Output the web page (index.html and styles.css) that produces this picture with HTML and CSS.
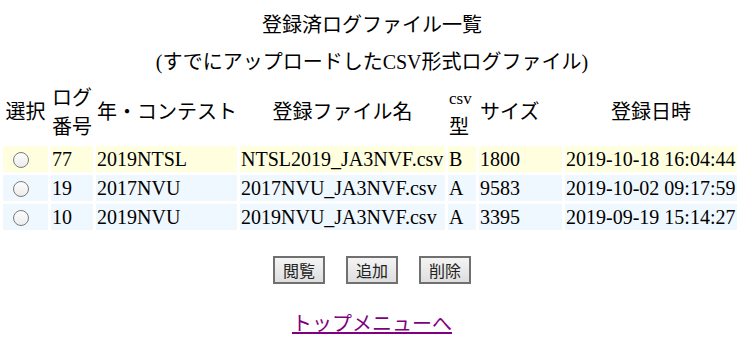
FILE: index.html
```html
<!DOCTYPE html>
<html lang="ja">
<head>
  <meta charset="UTF-8">
  <title>登録済ログファイル一覧</title>
  <link rel="stylesheet" href="styles.css">
</head>
<body>
  <div class="page">
    <div class="title">登録済ログファイル一覧</div>
    <div class="subtitle">(すでにアップロードしたCSV形式ログファイル)</div>

    <form class="log-form">
      <table class="log-table">
        <colgroup>
          <col class="c-sel">
          <col class="c-no">
          <col class="c-contest">
          <col class="c-file">
          <col class="c-type">
          <col class="c-size">
          <col class="c-date">
        </colgroup>
        <thead>
          <tr>
            <th class="center">選択</th>
            <th>ログ<br>番号</th>
            <th>年・コンテスト</th>
            <th class="center">登録ファイル名</th>
            <th><span class="small">csv</span><br>型</th>
            <th>サイズ</th>
            <th class="center">登録日時</th>
          </tr>
        </thead>
        <tbody>
          <tr class="row-new">
            <td><input type="radio" name="log" value="77" class="pick"></td>
            <td>77</td>
            <td>2019NTSL</td>
            <td>NTSL2019_JA3NVF.csv</td>
            <td>B</td>
            <td>1800</td>
            <td>2019-10-18 16:04:44</td>
          </tr>
          <tr class="row-old">
            <td><input type="radio" name="log" value="19" class="pick"></td>
            <td>19</td>
            <td>2017NVU</td>
            <td>2017NVU_JA3NVF.csv</td>
            <td>A</td>
            <td>9583</td>
            <td>2019-10-02 09:17:59</td>
          </tr>
          <tr class="row-old">
            <td><input type="radio" name="log" value="10" class="pick"></td>
            <td>10</td>
            <td>2019NVU</td>
            <td>2019NVU_JA3NVF.csv</td>
            <td>A</td>
            <td>3395</td>
            <td>2019-09-19 15:14:27</td>
          </tr>
        </tbody>
      </table>

      <div class="button-group">
        <button type="button">閲覧</button>
        <button type="button">追加</button>
        <button type="button">削除</button>
      </div>
    </form>

    <div class="menu-link">
      <a href="#top">トップメニューへ</a>
    </div>
  </div>
</body>
</html>
```

FILE: styles.css
```css
body {
  margin: 0;
  padding: 0;
  background-color: #fff;
  color: #000;
  font-family: "Liberation Serif", "Noto Sans CJK JP", serif;
  font-size: 20px;
}
.page {
  width: 744px;
  padding-top: 10px;
}
.title {
  text-align: center;
  line-height: 30px;
}
.subtitle {
  text-align: center;
  line-height: 30px;
  margin-top: 7px;
}
.log-form {
  margin: 0;
}
.log-table {
  width: 740px;
  margin-top: 2px;
  table-layout: fixed;
  border-collapse: separate;
  border-spacing: 3px;
}
.c-sel { width: 45px; }
.c-no { width: 42px; }
.c-contest { width: 141px; }
.c-file { width: 205px; }
.c-type { width: 28px; }
.c-size { width: 83px; }
.c-date { width: 172px; }
.log-table th,
.log-table td {
  padding: 1px;
  text-align: left;
  white-space: nowrap;
  vertical-align: middle;
}
.log-table th {
  font-weight: normal;
  line-height: 29px;
}
.log-table th.center {
  text-align: center;
}
.log-table th .small {
  font-size: 17px;
}
.log-table td {
  height: 24px;
  line-height: 24px;
}
.row-new td {
  background-color: #ffffe0; /* 最新 */
}
.row-old td {
  background-color: #f0f8ff;
}
.pick {
  appearance: none;
  -webkit-appearance: none;
  display: block;
  width: 16px;
  height: 16px;
  margin: 2px 0 0 9px;
  border: 1px solid #7a7a7a;
  border-radius: 50%;
  background: linear-gradient(#fdfdfd, #ececec);
}
.button-group {
  display: flex;
  justify-content: center;
  gap: 21px;
  margin-top: 23px;
}
.button-group button {
  width: 52px;
  height: 28px;
  padding: 0;
  font-family: "Noto Sans CJK JP", sans-serif;
  font-size: 16px;
  color: #222;
  background: linear-gradient(#f4f4f4, #dedede);
  border: 2px solid #707070;
  border-radius: 0;
}
.menu-link {
  text-align: center;
  margin-top: 24px;
  line-height: 29px;
}
.menu-link a {
  color: #800080;
  font-family: "Noto Sans CJK JP", sans-serif;
}
```
